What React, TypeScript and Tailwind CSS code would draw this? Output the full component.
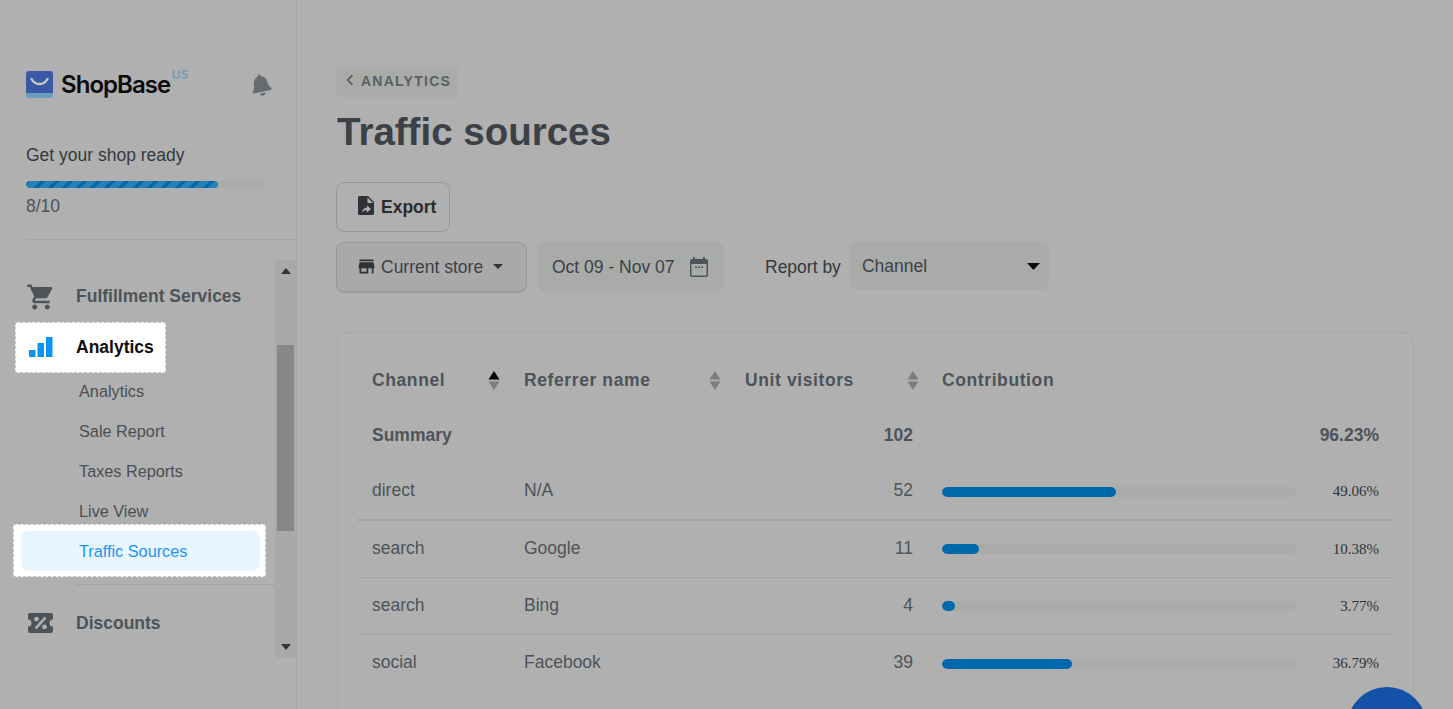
import { MdShoppingCart, MdStore, MdArrowDropDown, MdChevronLeft } from "react-icons/md";
import { FaBell } from "react-icons/fa";

const sans = "font-['Liberation_Sans',Arial,sans-serif]";

const rows = [
  { channel: "direct", name: "N/A", visitors: 52, pct: "49.06%", bar: "w-[49.06%]", line: "h-[57px] border-b-2 border-[#a3a3a6]" },
  { channel: "search", name: "Google", visitors: 11, pct: "10.38%", bar: "w-[10.38%]", line: "h-[57px] border-b border-[#a3a3a6]" },
  { channel: "search", name: "Bing", visitors: 4, pct: "3.77%", bar: "w-[3.77%]", line: "h-[57px] border-b border-[#a3a3a6]" },
  { channel: "social", name: "Facebook", visitors: 39, pct: "36.79%", bar: "w-[36.79%]", line: "h-[57px]" },
];

function SortIcon({ active }: { active?: boolean }) {
  return (
    <svg width="12" height="19" viewBox="0 0 12 19" className="shrink-0">
      <path d="M6 0l5.500 8.500H.5z" fill={active ? "#000" : "#7d7d7d"} />
      <path d="M6 19L.5 10.500h11z" fill="#7d7d7d" />
    </svg>
  );
}

function LogoMark() {
  return (
    <svg width="27" height="27" viewBox="0 0 27 27" className="shrink-0">
      <path d="M3 0h21a3 3 0 0 1 3 3v19H0V3a3 3 0 0 1 3-3z" fill="#3a5aa6" />
      <path d="M0 22h27v2a3 3 0 0 1-3 3H3a3 3 0 0 1-3-3z" fill="#6b9cbc" />
      <path d="M5.500 8c2 3.400 4.800 5 8 5s6-1.600 8-5" fill="none" stroke="#c9c9c9" strokeWidth="2.400" strokeLinecap="round" />
    </svg>
  );
}

function BarsIcon() {
  return (
    <svg width="24" height="20" viewBox="0 0 24 20" className="shrink-0 -mt-[2px]">
      <rect x="0" y="13" width="6.500" height="7" fill="#0a93f5" />
      <rect x="8.500" y="6" width="6.500" height="14" fill="#0a93f5" />
      <rect x="17" y="0" width="6.500" height="20" fill="#0a93f5" />
    </svg>
  );
}

function DiscountIcon() {
  return (
    <svg width="25" height="20" viewBox="0 0 25 20" className="shrink-0">
      <path
        fillRule="evenodd"
        fill="#4d5459"
        d="M2 0h21a2 2 0 0 1 2 2v4.500a3.500 3.500 0 0 0 0 7V18a2 2 0 0 1-2 2H2a2 2 0 0 1-2-2v-4.500a3.500 3.500 0 0 0 0-7V2a2 2 0 0 1 2-2zM8.500 3.700a2.400 2.400 0 1 0 0 4.800 2.400 2.400 0 0 0 0-4.800zM16.500 11.500a2.400 2.400 0 1 0 0 4.800 2.400 2.400 0 0 0 0-4.800zM16.600 3.600L6.700 14.600l1.800 1.800L18.400 5.400z"
      />
    </svg>
  );
}

function ExportIcon() {
  return (
    <svg width="16" height="19" viewBox="0 0 16 19" className="shrink-0 -mt-[3px]">
      <path
        fillRule="evenodd"
        fill="#2f3337"
        d="M1.500 0H10l6 6v11.500a1.500 1.500 0 0 1-1.500 1.500h-13A1.500 1.500 0 0 1 0 17.500V1.500A1.500 1.500 0 0 1 1.500 0zM9.500 1.500V7H15zM9 9.500V11.500C6 11.800 4.500 13.600 4 16.500c1.200-1.600 2.800-2.300 5-2.200V16.500l4-3.500z"
      />
    </svg>
  );
}

function CalendarIcon() {
  return (
    <svg width="18" height="20" viewBox="0 0 18 20" className="shrink-0">
      <path fill="#4d5459" d="M3 0h2v2h8V0h2v2h1a2 2 0 0 1 2 2v14a2 2 0 0 1-2 2H2a2 2 0 0 1-2-2V4a2 2 0 0 1 2-2h1z" />
      <rect x="1.500" y="7" width="15" height="11.500" fill="#a9aba9" />
      <rect x="5" y="9.500" width="2" height="1.500" fill="#4d5459" />
      <rect x="8" y="9.500" width="2" height="1.500" fill="#4d5459" />
      <rect x="11" y="9.500" width="2" height="1.500" fill="#4d5459" />
    </svg>
  );
}

function Sidebar() {
  return (
    <aside className="w-[297px] shrink-0 border-r border-[#a3a3a3] pt-[71px] h-[709px] overflow-hidden">
      <div className="flex items-start pl-[26px] pr-[24px] h-[27px]">
        <LogoMark />
        <span className="ml-[8px] font-['Inter',sans-serif] font-semibold text-[24px] leading-[28px] tracking-[-0.95px] text-[#0b0b0b]">ShopBase</span>
        <span className="ml-px -mt-[5px] font-['Noto_Sans',sans-serif] font-bold text-[13px] leading-[16px] text-[#7f9bb0]">US</span>
        <FaBell className="ml-auto mt-[3px] text-[#666c70] -rotate-12" size={22} />
      </div>
      <div className="pl-[26px] mt-[46px] text-[17.5px] leading-[22px] text-[#35393c]">Get your shop ready</div>
      <div className="ml-[26px] mt-[15px] w-[240px] h-[7px] rounded-full bg-[#a9aba9] overflow-hidden">
        <div className="h-full w-[80%] rounded-full bg-[repeating-linear-gradient(135deg,#0069ab_0px,#0069ab_3.5px,#2a7fb5_3.5px,#2a7fb5_10px)]" />
      </div>
      <div className="pl-[26px] mt-[6px] text-[17.5px] leading-[24px] text-[#4d5459]">8/10</div>
      <div className="ml-[26px] mt-[21px] border-t border-[#a3a3a3]" />

      <div className="flex mt-[20px] h-[398px]">
        <nav className="w-[275px] shrink-0 overflow-hidden">
          <div className="flex items-center h-[51px] mt-[11px] pl-[26px] gap-[20px] text-[17.5px] font-bold text-[#4d5459]">
            <MdShoppingCart size={30} className="text-[#4d5459]" />
            <span>Fulfillment Services</span>
          </div>
          <div className="flex items-center ml-[15px] w-[151px] h-[51px] bg-white border border-dashed border-[#c4c4c4] pl-[13px] gap-[23px] text-[17.5px] font-bold text-[#0d0d0d]">
            <BarsIcon />
            <span className="-mt-px">Analytics</span>
          </div>
          <ul className="-mt-[2px] text-[16.25px] text-[#4a4f55]">
            {["Analytics", "Sale Report", "Taxes Reports", "Live View"].map((t) => (
              <li key={t} className="h-[40px] flex items-center pl-[79px]">{t}</li>
            ))}
          </ul>
          <div className="relative ml-[13px] w-[253px] h-[53px] -mt-[7px] bg-white border border-dashed border-[#c4c4c4] px-[7px] pt-[6px]">
            <div className="h-[40px] w-[239px] rounded-[8px] bg-[#e8f5fe] flex items-center pl-[58px] text-[16.25px] text-[#1e93f0]">Traffic Sources</div>
          </div>
          <div className="ml-[76px] mt-[7px] border-t border-[#a3a3a6]" />
          <div className="flex items-center h-[76px] pl-[28px] gap-[23px] text-[17.5px] font-bold text-[#4d5459]">
            <DiscountIcon />
            <span>Discounts</span>
          </div>
        </nav>
        <div className="w-[21px] shrink-0 bg-[#a9a9a9] flex flex-col items-center justify-between py-[8px] relative">
          <svg width="10" height="6" viewBox="0 0 10 6"><path d="M5 0l5 6H0z" fill="#333" /></svg>
          <div className="absolute top-[85px] left-[2px] w-[17px] h-[186px] bg-[#878787]" />
          <svg width="10" height="6" viewBox="0 0 10 6"><path d="M5 6L0 0h10z" fill="#333" /></svg>
        </div>
      </div>
    </aside>
  );
}

function Main() {
  return (
    <main className="flex-1 pl-[39px] pt-[67px] pr-[39px] h-[709px] overflow-hidden">
      <div className="inline-flex items-start h-[30px] w-[122px] rounded-[4px] bg-[#a9aba9] pl-[3px] pt-[3px] text-[#5a6064]">
        <MdChevronLeft size={22} className="-mt-[1px]" />
        <span className="pt-px text-[14px] leading-[20px] font-bold tracking-[1.25px]">ANALYTICS</span>
      </div>
      <h1 className="mt-[6px] ml-px text-[38.5px] leading-[56px] font-bold text-[#3b4146]">Traffic sources</h1>

      <button className="mt-[22px] block w-[114px] h-[50px] rounded-[8px] border border-[#979797]">
        <span className="flex items-center pl-[21px] gap-[7px] text-[17.5px] font-bold text-[#2a2c2e]">
          <ExportIcon />
          Export
        </span>
      </button>

      <div className="flex items-center mt-[10px]">
        <button className="w-[191px] h-[50px] rounded-[8px] border border-[#979797] bg-[#a9a9a9] shadow-[0_1px_1px_rgba(0,0,0,0.1)] flex items-center pl-[19px] text-[17.5px] text-[#3b4146]">
          <MdStore size={21} className="text-[#2f3337] -mt-[2px]" />
          <span className="ml-[4px]">Current store</span>
          <MdArrowDropDown size={24} className="ml-[3px] -mt-[3px] text-[#333]" />
        </button>
        <div className="ml-[10px] w-[187px] h-[50px] rounded-[8px] bg-[#a9aba9] flex items-center pl-[15px] pr-[16px] justify-between text-[17.5px] text-[#3b4146]">
          <span>Oct 09 - Nov 07</span>
          <CalendarIcon />
        </div>
        <span className="ml-[41px] text-[17.5px] text-[#35393c]">Report by</span>
        <div className="ml-[9px] self-start w-[199px] h-[48px] rounded-[8px] bg-[#a9aba9] flex items-center justify-between pl-[12px] pr-[7px] text-[17.5px] text-[#3b4146]">
          <span>Channel</span>
          <svg width="13" height="7" viewBox="0 0 13 7" className="mr-[2px]"><path d="M0 0h13L6.500 7z" fill="#0a0a0a" /></svg>
        </div>
      </div>

      <section className="mt-[40px] ml-px w-[1077px] rounded-[12px] border border-[#a7a7a7] px-[19px] pt-[22px] pb-[40px]">
        <div className="h-[51px] pb-px px-[15px] grid grid-cols-[152px_221px_168px_29px_354px_83px] items-center text-[17.5px] font-bold tracking-[0.6px] text-[#4d5459]">
          <div className="flex items-center justify-between pr-[24px]">Channel<SortIcon active /></div>
          <div className="flex items-center justify-between pr-[24px]">Referrer name<SortIcon /></div>
          <div className="flex items-center justify-between -mr-[6px]">Unit visitors<SortIcon /></div>
          <div />
          <div className="col-span-2">Contribution</div>
        </div>
        <div className="h-[58px] px-[15px] grid grid-cols-[152px_221px_168px_29px_354px_83px] items-center text-[17.5px] font-bold text-[#4d5459]">
          <div>Summary</div>
          <div />
          <div className="text-right">102</div>
          <div />
          <div />
          <div className="text-right">96.23%</div>
        </div>
        {rows.map((r) => (
          <div key={r.channel + r.name} className={`${r.line} px-[15px] grid grid-cols-[152px_221px_168px_29px_354px_83px] items-center text-[17.5px] text-[#4d5459]`}>
            <div className="-mt-[2px]">{r.channel}</div>
            <div className="-mt-[2px]">{r.name}</div>
            <div className="-mt-[2px] text-right">{r.visitors}</div>
            <div />
            <div className="h-[10px] rounded-full bg-[#a9aba9] overflow-hidden">
              <div className={`h-full rounded-full bg-[#0069ab] ${r.bar}`} />
            </div>
            <div className="text-right font-['Liberation_Serif',serif] text-[15px] text-[#2f3337]">{r.pct}</div>
          </div>
        ))}
      </section>
    </main>
  );
}

export default function App() {
  return (
    <div className={`relative flex w-[1453px] h-[709px] overflow-hidden bg-[#b0b0b0] ${sans}`}>
      <Sidebar />
      <Main />
      <div className="absolute left-[1347px] top-[687px] w-[80px] h-[80px] rounded-full bg-[#1352a8]" />
    </div>
  );
}
